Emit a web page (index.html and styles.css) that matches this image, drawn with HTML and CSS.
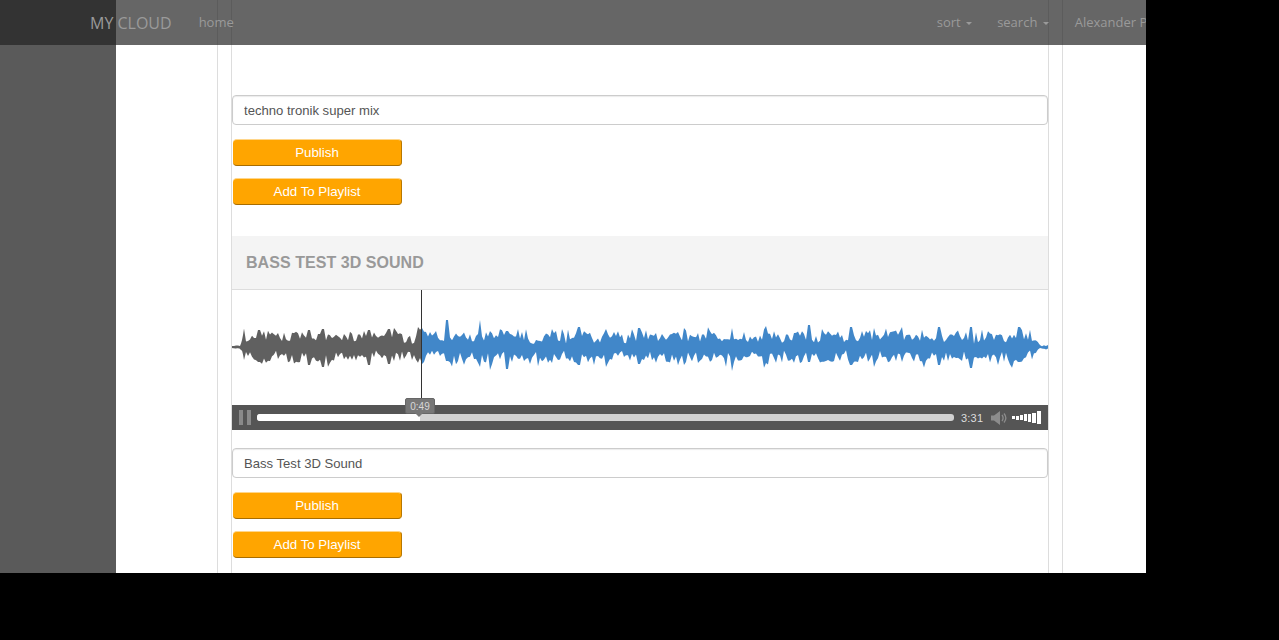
FILE: index.html
```html
<!DOCTYPE html>
<html lang="en">
<head>
    <meta charset="UTF-8">
    <title>My Cloud</title>
    <link rel="stylesheet" href="styles.css">
</head>
<body>
    <div class="page">
        <nav class="navbar">
            <a class="brand">MY CLOUD</a>
            <a class="nav-link">home</a>
            <div class="nav-right">
                <a class="nav-link">sort <b class="caret"></b></a>
                <a class="nav-link">search <b class="caret"></b></a>
                <a class="nav-link user">Alexander Petrov</a>
            </div>
        </nav>
        <div class="side"></div>
        <div class="main">
            <div class="outer">
                <div class="inner">
                    <div class="track-form first">
                        <input class="title-input" type="text" value="techno tronik super mix">
                        <button class="btn">Publish</button>
                        <button class="btn">Add To Playlist</button>
                    </div>
                    <h3 class="track-title">Bass Test 3D Sound</h3>
                    <div class="player">
                        <canvas id="wave" class="wave" width="816" height="115"></canvas>
                        <div class="cursor"></div>
                        <div class="controls">
                            <span class="pause"><i></i><i></i></span>
                            <div class="progress"><div class="played"></div></div>
                            <div class="time-tip">0:49</div>
                            <span class="duration">3:31</span>
                            <svg class="speaker" width="16" height="16" viewBox="0 0 16 16">
                                <path d="M0 5.500h3L9 1v14L3 10.500H0z" fill="#8c8c8c"/>
                                <path d="M11 5c1.500 2 1.500 4 0 6M13 3.500c2.500 3 2.500 6 0 9" fill="none" stroke="#8c8c8c" stroke-width="1.300"/>
                            </svg>
                            <span class="volume">
                                <i class="v1"></i><i class="v2"></i><i class="v3"></i><i class="v4"></i><i class="v5"></i><i class="v6"></i><i class="v7"></i>
                            </span>
                        </div>
                    </div>
                    <div class="track-form">
                        <input class="title-input" type="text" value="Bass Test 3D Sound">
                        <button class="btn">Publish</button>
                        <button class="btn">Add To Playlist</button>
                    </div>
                </div>
            </div>
        </div>
    </div>
    <script src="waveform.js"></script>
</body>
</html>
```

FILE: styles.css
```css
* {
    box-sizing: border-box;
}
body {
    margin: 0;
    background: #000;
    font-family: "Liberation Sans", Arial, sans-serif;
}
.page {
    position: relative;
    display: flex;
    width: 1146px;
    height: 573px;
    overflow: hidden;
}
.side {
    width: 116px;
    background: #5a5a5a;
}
.main {
    flex: 1;
    background: #fff;
    padding-left: 101px;
}

/* top bar sits over the page */
.navbar {
    position: absolute;
    top: 0;
    left: 0;
    display: flex;
    align-items: center;
    width: 100%;
    height: 45px;
    padding-left: 90px;
    background: rgba(33, 33, 33, 0.69);
    font-family: "Open Sans", sans-serif;
    white-space: nowrap;
    color: #9a9a9a;
}
.brand {
    font-size: 16px;
    margin-right: 27px;
}
.nav-link {
    font-size: 13px;
    margin: 0 25px 2px 0;
}
.nav-link.user {
    margin-left: 1px;
}
.nav-right {
    display: flex;
    margin-left: 678px;
}
.caret {
    display: inline-block;
    margin-left: 2px;
    vertical-align: middle;
    border-top: 3px solid #9a9a9a;
    border-left: 3px solid transparent;
    border-right: 3px solid transparent;
}

.outer {
    width: 846px;
    height: 573px;
    padding: 0 13px;
    border-left: 1px solid #ddd;
    border-right: 1px solid #ddd;
}
.inner {
    width: 818px;
    height: 573px;
    border-left: 1px solid #ddd;
    border-right: 1px solid #ddd;
}

.track-form {
    display: flex;
    flex-direction: column;
    align-items: flex-start;
    padding-top: 18px;
}
.track-form.first {
    padding-top: 95px;
}
.title-input {
    width: 816px;
    height: 30px;
    margin-bottom: 14px;
    padding: 0 11px;
    border: 1px solid #ccc;
    border-radius: 4px;
    background: #fff;
    box-shadow: inset 0 1px 1px rgba(0, 0, 0, 0.08);
    font-family: "Liberation Sans", Arial, sans-serif;
    font-size: 13.1px;
    color: #555;
}
.btn {
    width: 169px;
    height: 27px;
    margin: 0 0 12px 1px;
    padding: 0;
    border: 0;
    border-top: 1px solid #ffd68a;
    border-bottom: 1px solid #a86d00;
    border-right: 1px solid #b87800;
    border-radius: 4px;
    background: #ffa500;
    font-family: "Liberation Sans", Arial, sans-serif;
    font-size: 13.3px;
    color: #fff;
}
.track-title {
    height: 54px;
    margin: 19px 0 0;
    padding-left: 14px;
    border-bottom: 1px solid #ddd;
    background: #f4f4f4;
    font-size: 16px;
    letter-spacing: 0.05px;
    line-height: 54px;
    text-transform: uppercase;
    color: #999;
}

.player {
    position: relative;
}
.wave {
    display: block;
    width: 816px;
    height: 115px;
}
.cursor {
    position: absolute;
    top: 0;
    left: 189px;
    width: 1px;
    height: 110px;
    background: #333;
}
.controls {
    position: relative;
    display: flex;
    align-items: center;
    width: 816px;
    height: 25px;
    padding-left: 7px;
    background: #555;
}
.pause {
    display: flex;
    gap: 4px;
    width: 18px;
}
.pause i {
    width: 4px;
    height: 15px;
    background: #8a8a8a;
}
.progress {
    width: 697px;
    height: 7px;
    border-radius: 3px;
    background: #d2d2d2;
}
.played {
    width: 163px;
    height: 7px;
    border-radius: 3px 0 0 3px;
    background: #fff;
}
.time-tip {
    position: absolute;
    top: -7px;
    left: 173px;
    width: 30px;
    height: 16px;
    border: 1px solid #666;
    border-radius: 2px;
    background: #777;
    font-size: 10px;
    line-height: 15px;
    text-align: center;
    color: #d8d8d8;
}
.time-tip::after {
    content: "";
    position: absolute;
    top: 14px;
    left: 9px;
    border-top: 4px solid #777;
    border-left: 4px solid transparent;
    border-right: 4px solid transparent;
}
.duration {
    width: 29px;
    margin-left: 7px;
    font-size: 11px;
    letter-spacing: 0.2px;
    color: #ddd;
}
.speaker {
    margin: 0 5px 0 1px;
}
.volume {
    display: flex;
    align-items: center;
    gap: 1px;
}
.volume i {
    width: 3px;
    background: #fff;
}
.volume .v1 { height: 3px; }
.volume .v2 { height: 4px; }
.volume .v3 { height: 5px; }
.volume .v4 { height: 7px; }
.volume .v5 { height: 8px; }
.volume .v6 { height: 10px; width: 4px; }
.volume .v7 { height: 13px; width: 4px; }
```

FILE: waveform.js
```js
// draws the track peaks, grey up to the play position and blue after it
var canvas = document.getElementById('wave');
var ctx = canvas.getContext('2d');
var mid = 57;
var splitAt = 189;

var seed = 23;
function rnd() {
    seed = (seed * 16807) % 2147483647;
    return seed / 2147483647;
}

// big spikes seen on the track: [x, up, down]
var spikes = [
    [25, 17, 15], [75, 17, 18], [89, 18, 20], [135, 17, 18], [155, 18, 17], [188, 19, 17],
    [213, 27, 14], [246, 27, 20], [256, 16, 23], [273, 16, 22], [318, 18, 16], [345, 20, 18],
    [372, 18, 20], [405, 19, 17], [450, 19, 18], [498, 19, 24], [532, 21, 16], [575, 22, 15],
    [617, 20, 18], [640, 19, 20], [668, 20, 15], [705, 20, 18], [737, 20, 21], [785, 20, 15]
];

// one side of the wave: a jagged point every 2 px, spikes are 1 point wide
function makeSide(side) {
    var out = [];
    var last = 6;
    for (var x = 0; x <= 816; x += 2) {
        var h = 10 + 2 * Math.sin(x / 5 + side) + (rnd() - 0.5) * 10;
        if (rnd() > 0.85) h += 5;
        spikes.forEach(function (s) {
            if (Math.abs(x - s[0]) < 2) h = s[side];
        });
        out[x] = last;
        out[x + 1] = (last + h) / 2;
        last = h;
    }
    return out;
}

var up = makeSide(1), down = makeSide(2);

// thin tail at both ends of the track
function edge(x) {
    if (x < 8) return 0.15;
    if (x < 12) return 0.15 + ((x - 8) / 4) * 0.85;
    if (x > 808) return 0.15;
    if (x > 800) return 0.15 + ((808 - x) / 8) * 0.85;
    return 1;
}

function drawPart(from, to, color) {
    ctx.fillStyle = color;
    ctx.beginPath();
    ctx.moveTo(from, mid);
    for (var i = from; i <= to; i++) ctx.lineTo(i, mid - up[i] * edge(i));
    for (var j = to; j >= from; j--) ctx.lineTo(j, mid + down[j] * edge(j));
    ctx.closePath();
    ctx.fill();
}

drawPart(0, splitAt, '#606060');
drawPart(splitAt, 816, '#4187c9');
```
